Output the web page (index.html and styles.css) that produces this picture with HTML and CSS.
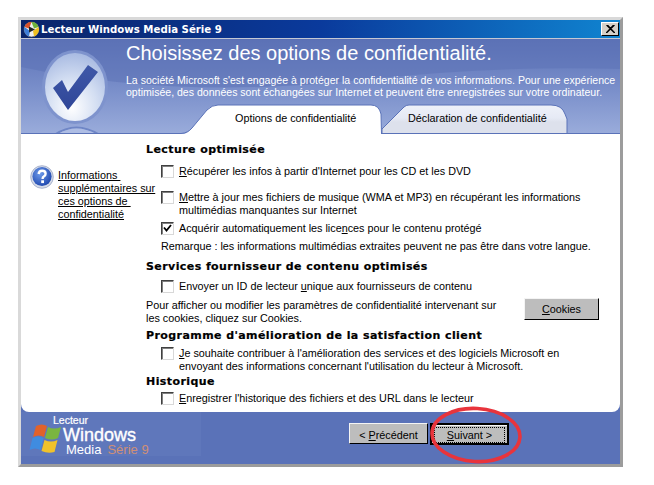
FILE: index.html
```html
<!DOCTYPE html>
<html lang="fr">
<head>
    <meta charset="UTF-8">
    <meta name="viewport" content="width=device-width, initial-scale=1.0">
    <title>Lecteur Windows Media Série 9</title>
    <link rel="stylesheet" href="styles.css">
</head>
<body>
    <div class="window">
        <div class="titlebar">
            <svg class="title-icon" width="17" height="17" viewBox="0 0 17 17">
                <circle cx="8.5" cy="8.5" r="7.5" fill="#f0f0f0" stroke="#555" stroke-width="0.6"/>
                <path d="M8.5 1 A7.5 7.5 0 0 0 1.5 6 L6 7.5 Z" fill="#d8502a"/>
                <path d="M8.5 1 A7.5 7.5 0 0 1 15.5 6 L11 7.5 Z" fill="#6fb23a"/>
                <path d="M15.5 6 A7.5 7.5 0 0 1 11 15.5 L10 10 Z" fill="#f0c020"/>
                <path d="M1.5 6 A7.5 7.5 0 0 0 6 15.5 L7 10 Z" fill="#3f7fd8"/>
                <path d="M6 5.5 L12 8.5 L6 11.5 Z" fill="#222"/>
            </svg>
            <span class="title-text">Lecteur Windows Media Série 9</span>
            <div class="close-btn">
                <svg width="9" height="8" viewBox="0 0 9 8"><path d="M0.5 0 L8.5 8 M8.5 0 L0.5 8 M1.5 0 L9 8 M7.5 0 L0 8" stroke="#000" stroke-width="1.1"/></svg>
            </div>
        </div>
        <div class="header">
            <svg class="header-bg" width="599" height="95" viewBox="0 0 599 95">
                <defs>
                    <linearGradient id="tab2" x1="0" y1="0" x2="0" y2="1">
                        <stop offset="0" stop-color="#eef1f9"/>
                        <stop offset="0.45" stop-color="#e6eaf5"/>
                        <stop offset="0.6" stop-color="#dde1ec"/>
                        <stop offset="1" stop-color="#dde1ec"/>
                    </linearGradient>
                    <radialGradient id="ball" cx="0.45" cy="0.8" r="0.85">
                        <stop offset="0" stop-color="#ffffff"/>
                        <stop offset="0.5" stop-color="#d3def2"/>
                        <stop offset="1" stop-color="#a3b6e0"/>
                    </radialGradient>
                    <linearGradient id="tick" x1="0" y1="0" x2="0" y2="1">
                        <stop offset="0" stop-color="#3f58a8"/>
                        <stop offset="1" stop-color="#2f4698"/>
                    </linearGradient>
                </defs>
                <path d="M0 28 Q150 60 330 42 Q470 26 599 30 L599 0 L0 0 Z" fill="#5c72b7" opacity="0.55"/>
                <path d="M33 95 Q55 80 79 95 L75 95 Q55 84 37 95 Z" fill="#6f86c6"/>
                <path d="M37 95 Q55 84 75 95 Z" fill="#aebde4"/>
                <ellipse cx="54" cy="48" rx="33" ry="37" fill="#7e93cd"/>
                <ellipse cx="54" cy="48" rx="30" ry="34" fill="url(#ball)"/>
                <path d="M32 49 L41 41 L47 53 L67 26 L77 33 L47 71 Z" fill="url(#tick)"/>
                <path d="M361 94.5 L361 90 L383 68 Q385 66 388 66 L530 66 Q541 66 544 75 L546 80 L546 94.5 Z" fill="url(#tab2)" stroke="#5a72b8"/>
                <path d="M160 95 L163 95 Q167 94 171 89 L186 71 Q191 66 197 66 L350 66 Q358 66 360 75 L360.5 95 Z" fill="#fff"/>
                <path d="M0 94.5 L160 94.5 Q167 94 171 89 L186 71 Q191 66 197 66 L350 66 Q358 66 360 75 L360.5 95" fill="none" stroke="#5a72b8"/>
                <path d="M546 94.5 L599 94.5" stroke="#5a72b8"/>
            </svg>
            <div class="header-text">
                <h1>Choisissez des options de confidentialité.</h1>
                <p>La société Microsoft s'est engagée à protéger la confidentialité de vos informations. Pour une expérience<br>optimisée, des données sont échangées sur Internet et peuvent être enregistrées sur votre ordinateur.</p>
            </div>
            <div class="tabs">
                <span class="tab tab-active">Options de confidentialité</span>
                <span class="tab tab-other">Déclaration de confidentialité</span>
            </div>
        </div>
        <div class="content">
            <div class="side">
                <svg class="help-icon" width="24" height="24" viewBox="0 0 24 24">
                    <defs>
                        <radialGradient id="help" cx="0.4" cy="0.35" r="0.7">
                            <stop offset="0" stop-color="#6f9bea"/>
                            <stop offset="1" stop-color="#1c45ad"/>
                        </radialGradient>
                    </defs>
                    <circle cx="12" cy="12" r="11.3" fill="#d5dbe8" stroke="#9aa6c4" stroke-width="0.8"/>
                    <circle cx="12" cy="11.5" r="9.6" fill="url(#help)"/>
                    <path d="M8.6 9 Q9 5.8 12.2 5.8 Q15.6 5.8 15.6 8.8 Q15.6 10.5 13.8 11.6 Q12.6 12.3 12.6 14" fill="none" stroke="#fff" stroke-width="2.4"/>
                    <rect x="11.2" y="15.3" width="2.8" height="2.8" fill="#fff"/>
                </svg>
                <a class="side-link" href="#">Informations&nbsp;<br>supplémentaires sur<br>ces options de&nbsp;<br>confidentialité</a>
            </div>
            <div class="options">
                <h2 class="sec first">Lecture optimisée</h2>
                <label class="opt gap9"><span class="box"></span><span><u>R</u>écupérer les infos à partir d'Internet pour les CD et les DVD</span></label>
                <label class="opt gap13"><span class="box"></span><span><u>M</u>ettre à jour mes fichiers de musique (WMA et MP3) en récupérant les informations<br>multimédias manquantes sur Internet</span></label>
                <label class="opt gap5"><span class="box checked"><svg width="9" height="9" viewBox="0 0 9 9"><path d="M1 3.5 L3.5 6.5 L8 1" fill="none" stroke="#000" stroke-width="1.8"/></svg></span><span>Acquérir automatiquement les lice<u>n</u>ces pour le contenu protégé</span></label>
                <p class="note gap5">Remarque : les informations multimédias extraites peuvent ne pas être dans votre langue.</p>
                <h2 class="sec gap7">Services fournisseur de contenu optimisés</h2>
                <label class="opt gap7"><span class="box"></span><span>Envoyer un ID de lecteur <u>u</u>nique aux fournisseurs de contenu</span></label>
                <div class="cookies-row">
                    <p>Pour afficher ou modifier les paramètres de confidentialité intervenant sur<br>les cookies, cliquez sur Cookies.</p>
                    <button class="btn btn-cookies" type="button"><u>C</u>ookies</button>
                </div>
                <h2 class="sec gap4">Programme d'amélioration de la satisfaction client</h2>
                <label class="opt gap5"><span class="box"></span><span><u>J</u>e souhaite contribuer à l'amélioration des services et des logiciels Microsoft en<br>envoyant des informations concernant l'utilisation du lecteur à Microsoft.</span></label>
                <h2 class="sec gap2">Historique</h2>
                <label class="opt gap4"><span class="box"></span><span><u>E</u>nregistrer l'historique des fichiers et des URL dans le lecteur</span></label>
            </div>
        </div>
        <div class="footer">
            <div class="logo">
                <svg class="flag" width="33" height="31" viewBox="0 0 33 31">
                    <path d="M7 3 Q13 0 18 3 L15 14 Q10 11 4 14 Z" fill="#e2622a"/>
                    <path d="M19 4 Q25 7 32 4 L29 15 Q23 18 16 15 Z" fill="#7ab540"/>
                    <path d="M3.5 15 Q9 12 14.5 15 L11.5 27 Q6 24 0.5 27 Z" fill="#3f8ce0"/>
                    <path d="M15.5 17 Q22 20 28.5 17 L25.5 29 Q19 31 12.5 28 Z" fill="#f0c22c"/>
                </svg>
                <div class="logo-text">
                    <span class="logo-small">Lecteur</span>
                    <span class="logo-windows">Windows</span>
                    <span class="logo-media">Media<span class="logo-serie">Série 9</span></span>
                </div>
            </div>
            <div class="nav">
                <button class="btn btn-prev" type="button">&lt; <u>P</u>récédent</button>
                <button class="btn btn-next" type="button"><span class="focus"><u>S</u>uivant &gt;</span></button>
            </div>
        </div>
        <svg class="circle-mark" width="100" height="60" viewBox="0 0 100 60">
            <ellipse cx="50" cy="30" rx="44" ry="26.5" fill="none" stroke="#e8343c" stroke-width="3.6" transform="rotate(3 50 30)"/>
        </svg>
    </div>
</body>
</html>
```

FILE: styles.css
```css
body {
    margin: 0;
    padding: 17px 0 0 18px;
    background-color: #fff;
    font-family: "Liberation Sans", Arial, sans-serif;
    font-size: 10.8px;
    color: #000;
}
.window {
    position: relative;
    width: 599px;
    height: 444px;
    border: 3px solid;
    border-color: #d9d9d9 #9c9c9c #9c9c9c #d9d9d9;
    background-color: #5a72b8;
}
.titlebar {
    display: flex;
    align-items: center;
    height: 18px;
    padding: 0 1px 0 2px;
    border-bottom: 1px solid #c4c8d4;
    background: linear-gradient(to right, #0a246a, #0a3a9c 50%, #1084d0);
}
.title-icon {
    margin-right: 1px;
}
.title-text {
    flex: 1;
    color: #fff;
    font-family: "DejaVu Sans", sans-serif;
    font-size: 10.2px;
    font-weight: bold;
    white-space: nowrap;
}
.close-btn {
    display: flex;
    align-items: center;
    justify-content: center;
    box-sizing: border-box;
    width: 18px;
    height: 14px;
    border: 1px solid;
    border-color: #fff #000 #000 #fff;
    background-color: #d4d0c8;
}
.header {
    position: relative;
    height: 95px;
    background: linear-gradient(to bottom, #5a70b6, #7b90cb 55%, #9aacdb);
    color: #fff;
}
.header-bg {
    position: absolute;
    left: 0;
    top: 0;
}
.header-text {
    position: relative;
    height: 66px;
    padding-left: 105px;
}
h1 {
    margin: 0;
    font-family: "Liberation Sans", sans-serif;
    font-size: 20px;
    font-weight: normal;
    line-height: 28px;
    white-space: nowrap;
}
.header-text p {
    margin: 7px 0 0;
    font-size: 10.55px;
    line-height: 12px;
    white-space: nowrap;
}
.tabs {
    position: relative;
    display: flex;
    color: #000;
    line-height: 26px;
}
.tab {
    white-space: nowrap;
}
.tab-active {
    margin-left: 214px;
    width: 173px;
}
.content {
    display: flex;
    box-sizing: border-box;
    height: 278px;
    border-bottom-left-radius: 8px;
    border-bottom-right-radius: 8px;
    background-color: #fff;
    line-height: 13px;
}
.side {
    display: flex;
    width: 125px;
    padding: 31px 0 0 9px;
    box-sizing: border-box;
}
.help-icon {
    flex: none;
    margin: 0 4px 0 0;
}
.side-link {
    display: block;
    padding-top: 4px;
    color: #000;
    white-space: nowrap;
    height: 52px;
}
.options {
    flex: 1;
    padding-top: 9px;
}
.sec {
    margin: 0;
    font-family: "DejaVu Sans", sans-serif;
    font-size: 11px;
    font-weight: bold;
    letter-spacing: 0.42px;
    line-height: 13px;
    white-space: nowrap;
    -webkit-text-stroke: 0.2px #000;
}
.opt {
    display: flex;
    margin-left: 15px;
    white-space: nowrap;
}
.note {
    margin-bottom: 0;
    margin-left: 15px;
    white-space: nowrap;
}
.box {
    flex: none;
    display: flex;
    align-items: center;
    justify-content: center;
    box-sizing: border-box;
    width: 13px;
    height: 13px;
    margin-right: 5px;
    border: 1px solid;
    border-color: #404040 #d8d8d8 #d8d8d8 #404040;
    box-shadow: inset 1px 1px 0 #808080;
}
.gap2 { margin-top: 2px; }
.gap4 { margin-top: 4px; }
.gap5 { margin-top: 5px; }
.gap7 { margin-top: 7px; }
.gap9 { margin-top: 9px; }
.gap13 { margin-top: 13px; }
.cookies-row {
    display: flex;
    justify-content: space-between;
    margin-top: 6px;
    white-space: nowrap;
}
.cookies-row p {
    margin: 0;
}
.btn {
    box-sizing: border-box;
    padding: 0;
    border: 1px solid;
    border-color: #f4f4f4 #000 #000 #f4f4f4;
    background-color: #bdbdbd;
    font-family: "Liberation Sans", Arial, sans-serif;
    font-size: 10.8px;
    color: #000;
}
.btn-cookies {
    width: 75px;
    height: 22px;
    margin: -1px 21px 0 0;
}
.footer {
    display: flex;
    justify-content: space-between;
    height: 52px;
}
.logo {
    display: flex;
    width: 180px;
    height: 44px;
    padding-left: 8px;
    box-sizing: border-box;
    background-color: #5f77bb;
    color: #fff;
}
.flag {
    flex: none;
    margin-top: 11px;
}
.logo-text {
    display: flex;
    flex-direction: column;
    margin-left: 1px;
}
.logo-small {
    margin-left: -10px;
    margin-top: 3px;
    font-size: 10.5px;
    line-height: 11px;
    -webkit-text-stroke: 0.2px #fff;
}
.logo-windows {
    margin-top: 1px;
    font-size: 18px;
    line-height: 16px;
    -webkit-text-stroke: 0.35px #fff;
}
.logo-media {
    margin-left: 3px;
    font-size: 13px;
    line-height: 13px;
}
.logo-serie {
    margin-left: 6px;
    color: #cf8f76;
}
.nav {
    display: flex;
    gap: 2px;
    padding: 11px 111px 0 0;
}
.btn-prev {
    width: 79px;
    height: 21px;
    padding-top: 2px;
}
.btn-next {
    width: 79px;
    height: 22px;
    padding: 2px;
    border: 2px solid #000;
    box-shadow: inset 1px 1px 0 #f4f4f4;
}
.focus {
    display: block;
    height: 14px;
    line-height: 14px;
    border: 1px dotted #000;
}
.circle-mark {
    position: absolute;
    left: 405px;
    top: 385px;
}
```
